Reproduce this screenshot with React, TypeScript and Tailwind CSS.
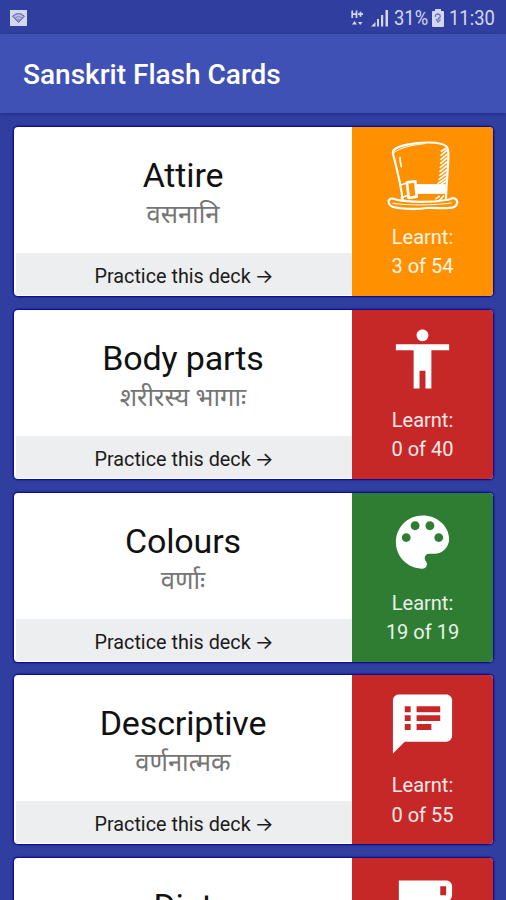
import type { ReactNode } from 'react';

type Deck = {
  title: string;
  sanskrit: string;
  learnt: number;
  total: number;
  color: string;
  icon: ReactNode;
};

function MaterialIcon({ d }: { d: string }) {
  return (
    <svg viewBox="0 0 24 24" className="h-[72px] w-[71px] fill-white">
      <path d={d} />
    </svg>
  );
}

function HatIcon() {
  return (
    <svg
      viewBox="139 60 216 216"
      className="size-[72px] fill-none stroke-white"
      strokeWidth="6.5"
      strokeLinecap="round"
      strokeLinejoin="round"
    >
      {/* crown */}
      <path d="M186 241C181 190 165 135 157 101C153 88 172 80 200 74C240 65 300 64 317 79C325 86 323 100 323 112C322 160 316 200 316 238" />
      <path d="M160 98C178 83 215 75 252 71" strokeWidth="3" />
      <path d="M178 112C178 123 180 132 182 140" strokeWidth="5" />
      {/* shading */}
      <path
        d="M302 94L315 86M301 106L318 92M301 118L319 103M300 130L319 114M299 142L319 126M298 154L318 138M297 166L318 150M295 178L317 162M292 190L316 174M302 192L315 184M286 236L296 229M297 240L309 228"
        strokeWidth="5"
      />
      {/* band and buckle */}
      <path d="M227 194H314V220H227Z" fill="white" strokeWidth="3" />
      <path d="M178 196L196 190M182 233L202 226" strokeWidth="5" />
      <path d="M199 187L224 184L228 230L204 234Z" strokeWidth="8" />
      {/* brim */}
      <path d="M185 242C230 247 275 247 316 240C329 241 331 232 340 235C354 239 352 256 338 262C320 268 292 262 258 264C220 269 177 266 158 261C143 256 139 240 150 236C160 233 164 241 185 242Z" />
      <path d="M157 250C205 257 280 256 332 249" strokeWidth="3" />
    </svg>
  );
}

const decks: Deck[] = [
  { title: 'Attire', sanskrit: 'वसनानि', learnt: 3, total: 54, color: 'bg-[#ff9100]', icon: <HatIcon /> },
  {
    title: 'Body parts',
    sanskrit: 'शरीरस्य भागाः',
    learnt: 0,
    total: 40,
    color: 'bg-[#c62828]',
    icon: (
      <MaterialIcon d="M12 2c1.1 0 2 .9 2 2s-.9 2-2 2-2-.9-2-2 .9-2 2-2zm9 7h-6v13h-2v-6h-2v6H9V9H3V7h18v2z" />
    ),
  },
  {
    title: 'Colours',
    sanskrit: 'वर्णाः',
    learnt: 19,
    total: 19,
    color: 'bg-[#2e7d32]',
    icon: (
      <MaterialIcon d="M12 3c-4.97 0-9 4.03-9 9s4.03 9 9 9c.83 0 1.5-.67 1.5-1.5 0-.39-.15-.74-.39-1.01-.23-.26-.38-.61-.38-.99 0-.83.67-1.5 1.5-1.5H16c2.76 0 5-2.24 5-5 0-4.42-4.03-8-9-8zm-5.5 9c-.83 0-1.5-.67-1.5-1.5S5.67 9 6.5 9 8 9.67 8 10.5 7.33 12 6.5 12zm3-4C8.67 8 8 7.33 8 6.5S8.67 5 9.5 5s1.5.67 1.5 1.5S10.33 8 9.5 8zm5 0c-.83 0-1.5-.67-1.5-1.5S13.67 5 14.5 5s1.5.67 1.5 1.5S15.33 8 14.5 8zm3 4c-.83 0-1.5-.67-1.5-1.5S16.67 9 17.5 9s1.5.67 1.5 1.5-.67 1.5-1.5 1.5z" />
    ),
  },
  {
    title: 'Descriptive',
    sanskrit: 'वर्णनात्मक',
    learnt: 0,
    total: 55,
    color: 'bg-[#c62828]',
    icon: (
      <MaterialIcon d="M20 2H4c-1.1 0-1.99.9-1.99 2L2 22l4-4h14c1.1 0 2-.9 2-2V4c0-1.1-.9-2-2-2zM8 14H6v-2h2v2zm0-3H6V9h2v2zm0-3H6V6h2v2zm7 6h-5v-2h5v2zm3-3h-8V9h8v2zm0-3h-8V6h8v2z" />
    ),
  },
  {
    title: 'Diet',
    sanskrit: 'आहारः',
    learnt: 0,
    total: 60,
    color: 'bg-[#c62828]',
    icon: (
      <MaterialIcon d="M20 3H4v10c0 2.21 1.79 4 4 4h6c2.21 0 4-1.79 4-4v-3h2c1.11 0 2-.9 2-2V5c0-1.11-.89-2-2-2zm0 5h-2V5h2v3zM2 21h18v-2H2v2z" />
    ),
  },
];

function StatusBar() {
  return (
    <div className="flex h-[34px] shrink-0 items-center bg-[#303f9f] pt-[2px] pr-[11px] pl-[10px] text-[#d3d7f0]">
      <svg viewBox="0 0 17 16" className="h-4 w-[17px]">
        <rect width="17" height="16" fill="#d3d7f0" />
        <path d="M2.5 6.2Q8.5 .8 14.5 6.2L8.5 12.5Z" fill="#8f97c8" stroke="#5f69ab" strokeWidth="1" />
        <path d="M4.5 6.5Q8.5 3.5 12.5 6.5M6.5 8.5Q8.5 7 10.5 8.5" fill="none" stroke="#d3d7f0" strokeWidth="1" />
      </svg>
      <div className="ml-auto flex items-center">
        <svg viewBox="0 0 13 17" className="mr-[7px] h-[17px] w-[13px]" fill="none" stroke="currentColor" strokeWidth="1.7">
          <path d="M1.2 0.5V8M5.5 0.5V8M1.2 4.2H5.5M7 4.2H12M9.5 1.7V6.7" />
          <path d="M1 14.5L3.5 11L6 14.5ZM7 12L9.2 15L11.5 12Z" fill="currentColor" stroke="none" />
        </svg>
        <svg viewBox="0 0 18 18" className="mr-[5px] h-[18px] w-[18px]" fill="currentColor">
          <path d="M0 17.5L4.5 13V17.5ZM6 10H8V17.5H6ZM10 6H12.2V17.5H10ZM14.5 1H17V17.5H14.5Z" />
        </svg>
        <span className="inline-block w-[38px] text-[20px] leading-none whitespace-nowrap">
          <span className="inline-block origin-left scale-x-[0.92]">31%</span>
        </span>
        <svg viewBox="0 0 12 18" className="mr-[5px] h-[18px] w-[12px]">
          <path d="M3 0H9V2H11Q12 2 12 3V17Q12 18 11 18H1Q0 18 0 17V3Q0 2 1 2H3Z" fill="currentColor" />
          <path d="M3.5 8Q3 5 6 5Q9 5.5 8 8.5Q6 9 6 11M4 10L6 13L8.5 10.5" fill="none" stroke="#6d76b8" strokeWidth="1.3" />
        </svg>
        <span className="inline-block w-[46px] text-[20px] leading-none whitespace-nowrap">
          <span className="inline-block origin-left scale-x-[0.92]">11:30</span>
        </span>
      </div>
    </div>
  );
}

function DeckCard({ deck }: { deck: Deck }) {
  return (
    <article className="flex h-[169px] shrink-0 overflow-hidden rounded-[4px] bg-white shadow-[0_0_2px_1px_#00008b]">
      <div className="flex w-[338px] flex-col text-center">
        <div className="flex-1 pt-[28px]">
          <h2 className="text-[34px] leading-[40px] tracking-[-0.15px] text-[#111111]">{deck.title}</h2>
          <p className="text-[25.5px] leading-[39px] text-[#757575]">{deck.sanskrit}</p>
        </div>
        <div className="mb-px ml-[2px] h-[42px] bg-[#eceeef] text-[19.8px] leading-[46px] text-[#1b1b1b]">
          Practice this deck <span className="-ml-[1px] font-[Inter,sans-serif]">→</span>
        </div>
      </div>
      <div className={`flex flex-1 flex-col items-center pt-[13px] text-[20px] leading-[29.25px] text-white/90 ${deck.color}`}>
        {deck.icon}
        <span className="mt-[11px]">Learnt:</span>
        <span>
          {deck.learnt} of {deck.total}
        </span>
      </div>
    </article>
  );
}

export default function App() {
  return (
    <div className="flex h-[900px] w-[506px] flex-col overflow-hidden bg-[#303f9f] font-['Roboto','Noto_Sans',sans-serif]">
      <StatusBar />
      <header className="z-10 flex h-[79px] shrink-0 items-center bg-[#3f51b5] pt-[3px] pl-[23px] shadow-[0_1px_3px_#1d2a80]">
        <h1 className="text-[28px] font-medium text-white">Sanskrit Flash Cards</h1>
      </header>
      <main className="flex min-h-0 flex-1 flex-col gap-[13.75px] pt-[14px] pr-[13px] pl-[14px]">
        {decks.map((deck) => (
          <DeckCard key={deck.title} deck={deck} />
        ))}
      </main>
    </div>
  );
}
